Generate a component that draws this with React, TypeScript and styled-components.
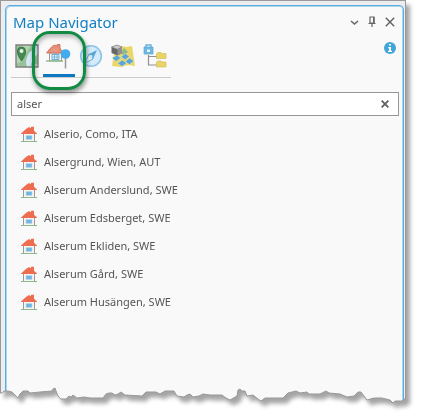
import React, { useState } from "react";
import styled, { createGlobalStyle } from "styled-components";

const GlobalStyle = createGlobalStyle`
  * { box-sizing: border-box; }
  body {
    margin: 0;
    background: #fff;
    color: #555;
    font: 11px/16px "Noto Sans", "Open Sans", sans-serif;
  }
  button, input { font: inherit; color: inherit; }
`;

const Page = styled.div`
  display: flex;
  flex-direction: column;
  min-height: 100vh;
  padding: 0 15px 16px 0;
  background: #fff;
`;

const Sheet = styled.div`
  flex: 1;
  display: flex;
  flex-direction: column;
  filter: drop-shadow(4px 5px 2px #a4a4a4);
`;

const Frame = styled.div`
  flex: 1;
  display: flex;
  padding: 4px 1px 0 4px;
  background: #ededf0;
  border: 1px solid #999;
  border-bottom: 0;
`;

const Panel = styled.main`
  flex: 1;
  min-width: 0;
  padding: 4px 4px 0 5px;
  background: #f9f9f9;
  border: 1px solid #5dadde;
  border-bottom: 0;
  border-radius: 5px 5px 0 0;
  box-shadow: inset 1px 1px #a9d4ee, inset -1px 0 #a9d4ee;
`;

const TitleBar = styled.header`
  display: flex;
  align-items: center;
  justify-content: space-between;
  height: 24px;
  padding-left: 2px;
`;

const Title = styled.h1`
  margin: 0;
  color: #1480c4;
  font-size: 15px;
  line-height: 24px;
  font-weight: 400;
`;

const WindowControls = styled.div`
  display: flex;
  align-items: center;
`;

const IconButton = styled.button`
  display: flex;
  align-items: center;
  justify-content: center;
  width: 18px;
  height: 18px;
  padding: 0;
  border: 0;
  background: none;
  cursor: pointer;
`;

const ToolRow = styled.div`
  display: flex;
  align-items: flex-start;
  justify-content: space-between;
  padding-top: 5px;
`;

const Tabs = styled.div`
  display: flex;
  border-bottom: 1px solid #ccc;
`;

const Tab = styled.button<{ $active: boolean }>`
  position: relative;
  display: flex;
  align-items: flex-start;
  justify-content: center;
  width: 32px;
  height: 38px;
  padding: 5px 0 0;
  border: 0;
  border-bottom: 3px solid ${(p) => (p.$active ? "#0c7ac2" : "transparent")};
  background: none;
  cursor: pointer;
`;

const Highlight = styled.span`
  position: absolute;
  z-index: 1;
  inset: -8px -11px -16px;
  border: 3px solid #118a43;
  border-radius: 18px;
  box-shadow: 1px 3px 4px #0006, inset 1px 3px 4px #0004;
  pointer-events: none;
`;

const SearchBox = styled.div`
  display: flex;
  align-items: center;
  height: 24px;
  margin-top: 14px;
  padding: 0 4px 0 5px;
  border: 1px solid #979797;
  background: #fff;
`;

const SearchInput = styled.input`
  flex: 1;
  min-width: 0;
  padding: 0;
  border: 0;
  outline: 0;
  background: none;
`;

const Results = styled.ul`
  margin: 4px 0 0;
  padding: 0;
  list-style: none;
`;

const Result = styled.li`
  display: flex;
  align-items: center;
  gap: 7px;
  height: 28px;
  padding-left: 10px;
`;

const TornStrip = styled.svg`
  display: block;
  width: 100%;
  height: 18px;
`;

const HouseIcon = () => (
  <svg width="16" height="16" viewBox="0 0 16 16" aria-hidden="true">
    <path d="M2 7h12v8H2z" fill="#f6f6f6" />
    <path d="M2.5 7v8M13.5 7v8" stroke="#999" />
    <path d="M0 7.5 5 3l3-2 2 1.3V.8h3v4l3 2.7V8H0z" fill="#ee6c4f" />
    <path d="M5 9.5h6v4H5z" fill="#6bb8e8" stroke="#ccd2d6" strokeWidth=".6" />
    <path d="M0 15.5h16" stroke="#8db98c" />
  </svg>
);

const MapIcon = () => (
  <svg width="24" height="24" viewBox="0 0 24 24" aria-hidden="true">
    <path d="M1 1h22v22H1z" fill="#98c29b" />
    <path d="M6 1h10l-5 8-4 8-6 3V8z" fill="#b5d5b4" />
    <path d="M20 2c-1 5-6 5-7 9-1 3-3 5-1 12h4c-1-5 4-6 4-10l3-4V2z" fill="#d4eaf8" />
    <path d="M17 20h6v3h-8z" fill="#c3d7be" />
    <path d="M1 1h22v22H1z" fill="none" stroke="#808080" strokeWidth="1.4" />
    <path d="M6.5 17C3 12 2.5 10 2.5 7a4 4 0 0 1 8 0c0 3-.5 5-4 10z" fill="#428a50" stroke="#3f7849" />
    <circle cx="6.5" cy="7" r="2" fill="#eaf3eb" />
  </svg>
);

const LocateIcon = () => (
  <svg width="26" height="26" viewBox="0 0 26 26" aria-hidden="true">
    <path d="M3.5 9h12v8h-12z" fill="#f8f8f8" stroke="#999" />
    <path d="M.5 9 4 4.5 8 1l3 1V.5h3V4l3 5z" fill="#e58f77" stroke="#c8705b" strokeWidth=".8" />
    <path d="M5 7h8M6 5h6" stroke="#efaa95" strokeWidth=".6" />
    <path d="M6 10.5h7v5H6z" fill="#e4f4fc" stroke="#67add6" />
    <path d="M8.5 11v5M11 11v5M6 13h7" stroke="#67add6" strokeWidth=".8" />
    <path d="M0 17h17" stroke="#8cbb86" strokeWidth="1.4" />
    <path d="M19.5 14v10.5" stroke="#999" strokeWidth="1.5" />
    <circle cx="19.5" cy="10" r="4.8" fill="#41abf0" />
  </svg>
);

const CompassIcon = () => (
  <svg width="24" height="24" viewBox="0 0 24 24" aria-hidden="true">
    <circle cx="12" cy="12" r="10.3" fill="#d3ebfa" stroke="#8dc3e8" strokeWidth="1.6" />
    <path d="M18 6 14 15 6 19l4-9z" fill="#5aa6d7" />
    <path d="m10 10 4 5-8 4z" fill="#e7f5fd" stroke="#5aa6d7" strokeWidth=".8" />
    <circle cx="12" cy="12.5" r="1.4" fill="#d0eafa" />
  </svg>
);

const LayersIcon = () => (
  <svg width="26" height="24" viewBox="0 0 26 24" aria-hidden="true">
    <path d="m5 4 7-2 4 1 6-1 3 20-7-1-7 2-9-1z" fill="#ead768" />
    <path d="m11 9 3-5 4 4-4 4z" fill="#91b98c" />
    <path d="m2 14 5-3 4 3-5 3.5zM11 12.5l4.5-3 4 3-4.5 3.5zM15 17.5l4.5-3.5 4.5 3-4.5 3.5zM7.5 19.5l4.5-3.5 5 3-5 3.5z" fill="#5aa6da" stroke="#eee4a0" strokeWidth=".6" />
    <path d="m1.5 3 5.5-2 5 2v6l-4.5 2.5L1.5 9z" fill="#666" />
    <path d="m1.5 3 5.5-2 5 2-4.5 2.3z" fill="#ccc" stroke="#888" strokeWidth=".7" />
    <path d="m7.5 5.3 4.5-2V9l-4.5 2.5z" fill="#919191" />
  </svg>
);

const CatalogIcon = () => (
  <svg width="24" height="24" viewBox="0 0 24 24" aria-hidden="true">
    <path d="M5.5 11v10H14M5.5 12.5H14" fill="none" stroke="#919191" strokeWidth="1.2" />
    <path d="M3 4V1h5v3" fill="none" stroke="#69b3df" strokeWidth="1.4" />
    <path d="M1 3h9v7H1z" fill="#6eb8e3" stroke="#5aa7d4" strokeWidth=".7" />
    <path d="M4 5.5h3V8H4z" fill="#eaf6fc" />
    <path d="M13.5 9.5 15 8.5h3l1 1h4v5h-9.5zM13.5 18l1.5-1h3l1 1h4v5h-9.5z" fill="#ead466" stroke="#d2bb5c" strokeWidth=".7" />
  </svg>
);

const ChevronIcon = () => (
  <svg width="9" height="7" viewBox="0 0 9 7" aria-hidden="true">
    <path d="M1 2l3.5 3L8 2" fill="none" stroke="#666" strokeWidth="1.6" />
  </svg>
);

const PinIcon = () => (
  <svg width="10" height="12" viewBox="0 0 10 12" aria-hidden="true">
    <path d="M3 1h4v6H3zM1.5 7.5h7M5 8v3" fill="none" stroke="#666" strokeWidth="1.2" />
    <path d="M6 1h1.5v6H6z" fill="#666" />
  </svg>
);

const CloseIcon = ({ size, weight }: { size: number; weight: number }) => (
  <svg width={size} height={size} viewBox="0 0 10 10" aria-hidden="true">
    <path d="m.8.8 8.4 8.4M9.2.8.8 9.2" stroke="#606060" strokeWidth={weight} />
  </svg>
);

const InfoIcon = () => (
  <svg width="12" height="12" viewBox="0 0 12 12" aria-hidden="true">
    <circle cx="6" cy="6" r="6" fill="#41a5da" />
    <path d="M5 2h2v1.5H5zM4.3 5H7v3.8h1V10H4V8.8h1V6.2h-.7z" fill="#fff" />
  </svg>
);

const tornOutline =
  "M0 393H2L4 391H8L12 392 15 395 18 398 20 394 23 391H28L30 393 40 392 52 391 53 389 55 388 56 391 58 396 61 399H66L69 396 71 397 73 395 77 398 84 397 90 398 103 398 106 394 109 393 112 393 115 395 118 394 121 392 125 395 142 396 146 392H156L160 394 165 391H174L177 396 184 397 187 395 190 394 193 397 199 396 203 394 210 395 222 395 226 398 230 400 237 396 238 390 240 389 242 391H245L247 396 253 395 258 399 261 401 265 398H283L288 393 296 391 300 393 307 392 309 394 320 394 326 391 329 393 340 394 347 397 354 396 358 392H361L364 396 367 400 374 398 382 398 390 400 393 403 395 401H402L404 399H406";

const TornEdge = () => (
  <TornStrip viewBox="0 386 406 18" preserveAspectRatio="none" aria-hidden="true">
    <clipPath id="torn">
      <path d={`${tornOutline}V386H0Z`} />
    </clipPath>
    <g clipPath="url(#torn)">
      <path d="M0 386h406v18H0z" fill="#f9f9f9" />
      <path d="M0 386h5v18H0zM404 386h1v18h-1z" fill="#ededf0" />
      <path d="M0 386h1v18H0zM405 386h1v18h-1z" fill="#999" />
      <path d="M5 386h1v18H5zM403 386h1v18h-1z" fill="#5dadde" />
      <path d="M6 386h1v18H6zM402 386h1v18h-1z" fill="#a9d4ee" />
    </g>
    <path d={tornOutline} fill="none" stroke="#999" />
  </TornStrip>
);

const tabs = [
  { name: "Bookmarks", Icon: MapIcon },
  { name: "Places", Icon: LocateIcon },
  { name: "Compass", Icon: CompassIcon },
  { name: "Layers", Icon: LayersIcon },
  { name: "Catalog", Icon: CatalogIcon },
];

const places = [
  "Alserio, Como, ITA",
  "Alsergrund, Wien, AUT",
  "Alserum Anderslund, SWE",
  "Alserum Edsberget, SWE",
  "Alserum Ekliden, SWE",
  "Alserum Gård, SWE",
  "Alserum Husängen, SWE",
];

export default function App() {
  const [active, setActive] = useState("Places");
  const [query, setQuery] = useState("alser");

  return (
    <Page>
      <GlobalStyle />
      <Sheet>
        <Frame>
          <Panel>
            <TitleBar>
              <Title>Map Navigator</Title>
              <WindowControls>
                <IconButton aria-label="Options"><ChevronIcon /></IconButton>
                <IconButton aria-label="Pin"><PinIcon /></IconButton>
                <IconButton aria-label="Close"><CloseIcon size={10} weight={1.4} /></IconButton>
              </WindowControls>
            </TitleBar>
            <ToolRow>
              <Tabs role="tablist">
                {tabs.map(({ name, Icon }) => (
                  <Tab
                    key={name}
                    role="tab"
                    aria-label={name}
                    aria-selected={active === name}
                    $active={active === name}
                    onClick={() => setActive(name)}
                  >
                    <Icon />
                    {active === name && <Highlight />}
                  </Tab>
                ))}
              </Tabs>
              <IconButton aria-label="Information"><InfoIcon /></IconButton>
            </ToolRow>
            <SearchBox>
              <SearchInput
                aria-label="Search places"
                value={query}
                onChange={(e) => setQuery(e.target.value)}
              />
              <IconButton aria-label="Clear search" onClick={() => setQuery("")}>
                <CloseIcon size={8} weight={2.2} />
              </IconButton>
            </SearchBox>
            <Results>
              {places.map((place) => (
                <Result key={place}>
                  <HouseIcon />
                  {place}
                </Result>
              ))}
            </Results>
          </Panel>
        </Frame>
        <TornEdge />
      </Sheet>
    </Page>
  );
}
